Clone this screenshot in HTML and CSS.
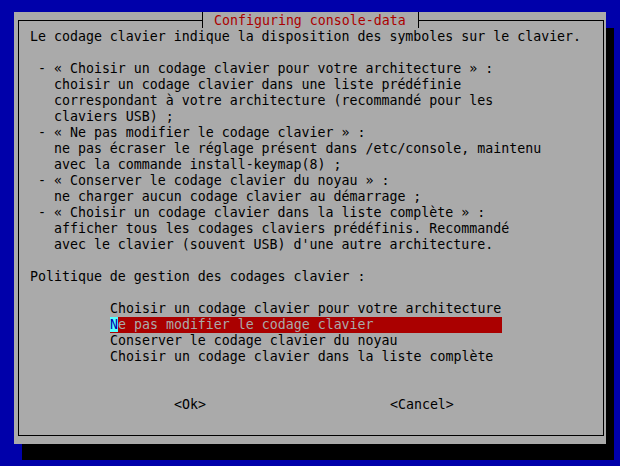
FILE: index.html
```html
<!DOCTYPE html>
<html lang="fr">
<head>
<meta charset="utf-8">
<title>Configuring console-data</title>
<link rel="stylesheet" href="styles.css">
</head>
<body>
<div class="screen">
  <div class="dialog">
    <div class="titlebar">
      <span class="edge edge-left"></span>
      <span class="tee"></span>
      <span class="title">Configuring console-data</span>
      <span class="tee"></span>
      <span class="edge edge-right"></span>
    </div>
    <div class="frame">
<pre class="desc">Le codage clavier indique la disposition des symboles sur le clavier.

 - « Choisir un codage clavier pour votre architecture » :
   choisir un codage clavier dans une liste prédéfinie
   correspondant à votre architecture (recommandé pour les
   claviers USB) ;
 - « Ne pas modifier le codage clavier » :
   ne pas écraser le réglage présent dans /etc/console, maintenu
   avec la commande install-keymap(8) ;
 - « Conserver le codage clavier du noyau » :
   ne charger aucun codage clavier au démarrage ;
 - « Choisir un codage clavier dans la liste complète » :
   afficher tous les codages claviers prédéfinis. Recommandé
   avec le clavier (souvent USB) d'une autre architecture.

Politique de gestion des codages clavier :</pre>
      <ul class="menu">
        <li>Choisir un codage clavier pour votre architecture</li>
        <li class="sel"><span class="cursor">N</span>e pas modifier le codage clavier</li>
        <li>Conserver le codage clavier du noyau</li>
        <li>Choisir un codage clavier dans la liste complète</li>
      </ul>
      <div class="buttons">
        <span class="btn">&lt;Ok&gt;</span>
        <span class="btn btn-cancel">&lt;Cancel&gt;</span>
      </div>
    </div>
  </div>
</div>
</body>
</html>
```

FILE: styles.css
```css
html, body {
  margin: 0;
  padding: 0;
}
body {
  background: #0000aa;
  height: 466px;
  overflow: hidden;
}
.screen {
  padding: 12px 0 0 14px;
}
.dialog {
  width: 592px;
  height: 432px;
  background: #aaaaaa;
  box-shadow: 8px 16px 0 0 #000000;
  display: flex;
  flex-direction: column;
  font-family: "DejaVu Sans Mono", monospace;
  font-size: 13.288px;
  line-height: 16px;
  color: #000000;
}
.titlebar {
  display: flex;
  height: 16px;
  margin: 0 2px 0 4px;
}
.edge {
  box-sizing: border-box;
  margin-top: 8px;
  height: 8px;
  border-top: 1px solid #000;
}
.edge-left {
  width: 184px;
  border-left: 1px solid #000;
}
.edge-right {
  flex: 1;
  border-right: 1px solid #000;
}
.tee {
  width: 1px;
  background: #000;
}
.title {
  color: #aa0000;
  white-space: pre;
  box-sizing: border-box;
  padding: 1px 12px 0 11px;
  line-height: 15px;
}
.frame {
  box-sizing: border-box;
  height: 408px;
  margin: 0 2px 0 4px;
  border: 1px solid #000;
  border-top: 0;
  padding: 1px 0 0 11px;
}
.desc {
  margin: 0;
  font: inherit;
  line-height: 16px;
  white-space: pre;
}
.menu {
  list-style: none;
  margin: 16px 0 0 80px;
  padding: 0;
  width: 392px;
}
.menu li {
  height: 16px;
  white-space: pre;
}
.menu .sel {
  background: #aa0000;
  color: #aaaaaa;
}
.cursor {
  background: #55ffff;
  color: #0000aa;
}
.buttons {
  display: flex;
  margin-top: 32px;
  padding-left: 144px;
}
.btn {
  white-space: pre;
}
.btn-cancel {
  margin-left: 184px;
}
```
